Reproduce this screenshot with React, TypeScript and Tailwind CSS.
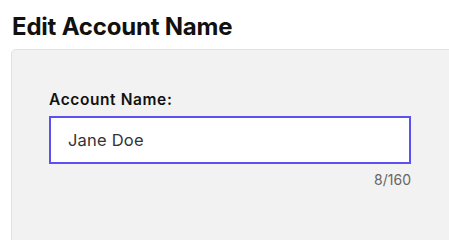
export default function App() {
  return (
    <div className="min-h-screen bg-white pl-[11px] pt-[13px] font-['Inter',sans-serif] overflow-hidden">
      <h1 className="pl-px text-[24px] leading-[28px] font-bold tracking-[-0.2px] text-[#111]">Edit Account Name</h1>
      <div className="mt-[8px] -mr-4 h-[200px] rounded-tl-[5px] border border-[#e2e2e2] bg-[#f2f2f2] pl-[37px] pr-[53px] pt-[40px]">
        <label className="block text-[15.5px] leading-[20px] font-semibold tracking-[0.6px] text-[#111]">Account Name:</label>
        <div className="mt-[6px] flex h-[48px] items-center border-2 border-[#5c50f0] bg-white px-[17px]">
          <input
            defaultValue="Jane Doe"
            className="w-full bg-transparent text-[16.5px] tracking-[0.2px] text-[#333] outline-none"
          />
        </div>
        <div className="mt-[8px] text-right text-[14px] leading-[16px] text-[#666]">8/160</div>
      </div>
    </div>
  )
}
